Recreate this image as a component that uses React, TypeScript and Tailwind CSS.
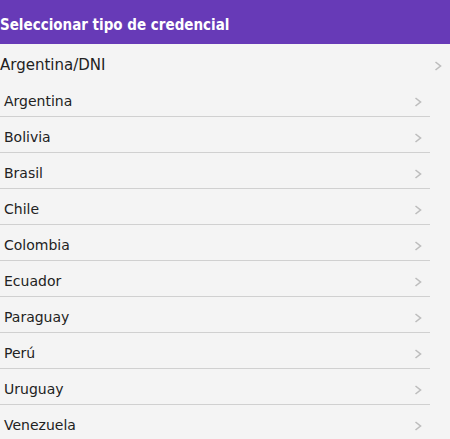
const paises = [
  "Argentina",
  "Bolivia",
  "Brasil",
  "Chile",
  "Colombia",
  "Ecuador",
  "Paraguay",
  "Perú",
  "Uruguay",
  "Venezuela",
];

function Chevron() {
  return (
    <svg width="8" height="10" viewBox="0 0 8 10" fill="none">
      <path d="M1.5 1 L6.5 5 L1.5 9" stroke="#bdbdbd" strokeWidth="1.6" />
    </svg>
  );
}

export default function App() {
  return (
    <div className="h-[439px] w-[450px] overflow-hidden bg-[#f4f4f4] font-['DejaVu_Sans',sans-serif] text-[#222]">
      {/* Header */}
      <div className="flex h-11 items-center bg-[#673ab7] pt-1.5">
        <h1 className="font-['DejaVu_Sans_Condensed','DejaVu_Sans',sans-serif] text-[15px] font-bold text-white">
          Seleccionar tipo de credencial
        </h1>
      </div>

      {/* Credencial actual */}
      <div className="flex h-[37px] items-center justify-between pt-1.5 pr-2">
        <span className="text-[15px]">Argentina/DNI</span>
        <Chevron />
      </div>

      {/* Lista de países */}
      <ul className="w-[430px]">
        {paises.map((pais) => (
          <li
            key={pais}
            className="flex h-9 items-center justify-between border-b border-[#d0d0d0] pt-1.5 pr-2 pl-1"
          >
            <span className="text-[14px]">{pais}</span>
            <Chevron />
          </li>
        ))}
      </ul>
    </div>
  );
}
